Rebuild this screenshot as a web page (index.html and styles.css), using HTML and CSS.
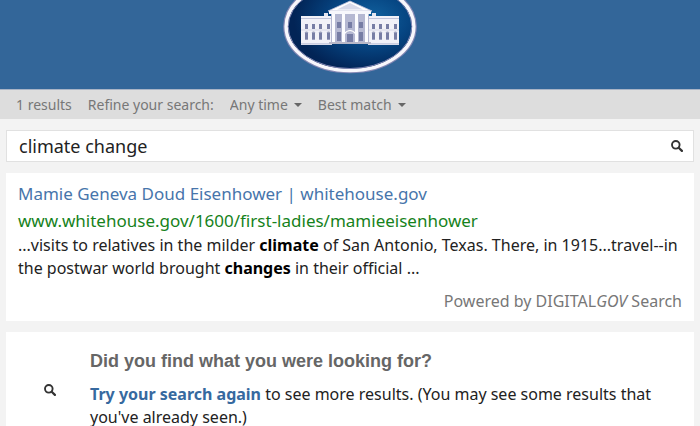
FILE: index.html
```html
<!DOCTYPE html>
<html lang="en">
<head>
    <meta charset="UTF-8">
    <meta name="viewport" content="width=device-width, initial-scale=1.0">
    <title>climate change - Search Results</title>
    <link rel="stylesheet" href="styles.css">
</head>
<body>

<svg width="0" height="0" class="defs" aria-hidden="true">
    <symbol id="search-icon" viewBox="0 0 12 12">
        <circle cx="4.8" cy="4.8" r="3.8" fill="none" stroke="currentColor" stroke-width="1.9"/>
        <path d="M7.7 7.7l3.2 3.2" stroke="currentColor" stroke-width="2.2" stroke-linecap="round"/>
    </symbol>
</svg>

<header class="header">
    <a href="#" aria-label="The White House">
        <svg class="logo" width="134" height="74" viewBox="0 0 134 74">
            <defs>
                <radialGradient id="seal" cx="66%" cy="42%" r="60%">
                    <stop offset="0" stop-color="#1263a0"/>
                    <stop offset="0.5" stop-color="#064582"/>
                    <stop offset="1" stop-color="#022456"/>
                </radialGradient>
                <g id="window">
                    <rect x="0" y="0" width="3" height="5" fill="#777da5"/>
                    <path d="M-0.5 8.7q2-2.6 4 0z" fill="#8f94b5"/>
                    <rect x="0" y="8.7" width="3" height="7" fill="#777da5"/>
                </g>
                <g id="wing">
                    <rect x="0" y="16" width="31" height="29" fill="#f1f1f8"/>
                    <path d="M0 18.5h31M0 43.8h31" stroke="#c0c3da" stroke-width="1.2"/>
                    <path d="M0 30h31" stroke="#d5d6e5"/>
                    <use href="#window" x="4" y="24"/>
                    <use href="#window" x="11" y="24"/>
                    <use href="#window" x="18" y="24"/>
                    <use href="#window" x="26" y="24"/>
                </g>
            </defs>
            <ellipse cx="67" cy="26.5" rx="65.5" ry="45.5" fill="#022456" stroke="#8588b4" stroke-width="2.6"/>
            <ellipse cx="67" cy="26.5" rx="63.8" ry="44" fill="url(#seal)" stroke="#f8f7fc" stroke-width="3.6"/>
            <ellipse cx="67" cy="26.5" rx="61.8" ry="42" fill="none" stroke="#8186b3"/>
            <rect x="41" y="13" width="4" height="4" fill="#e4e5f0"/>
            <rect x="89" y="13" width="4" height="4" fill="#e4e5f0"/>
            <use href="#wing" x="18"/>
            <use href="#wing" x="85"/>
            <rect x="48" y="11" width="38" height="33" fill="#b5b8d2"/>
            <path d="M45 11L67 1l22 10z" fill="#fff" stroke="#b8bad5" stroke-width="0.8"/>
            <path d="M54 9.5l13-6.5 13 6.5z" fill="#d7d9e9"/>
            <rect x="46" y="11" width="42" height="3" fill="#f7f7fc"/>
            <g fill="#777da5">
                <rect x="54" y="22" width="4" height="6"/>
                <rect x="54" y="32" width="4" height="9"/>
                <rect x="65" y="22" width="4" height="6"/>
                <rect x="64" y="34" width="6" height="9"/>
                <rect x="76" y="22" width="4" height="6"/>
                <rect x="76" y="32" width="4" height="9"/>
            </g>
            <path d="M61 34q6-7 12 0" fill="none" stroke="#fff" stroke-width="1.2"/>
            <g fill="#fcfcff">
                <rect x="49" y="14" width="3" height="28"/>
                <rect x="59" y="14" width="3" height="28"/>
                <rect x="72" y="14" width="3" height="28"/>
                <rect x="82" y="14" width="3" height="28"/>
            </g>
            <rect x="46" y="42" width="42" height="2" fill="#b8b8c8"/>
        </svg>
    </a>
</header>

<div class="filters">
    <span>1 results</span>
    <span>Refine your search:</span>
    <span class="dropdown">
        <select aria-label="Time range">
            <option>Any time</option>
            <option>Last day</option>
            <option>Last week</option>
        </select>
        <i class="caret"></i>
    </span>
    <span class="dropdown">
        <select aria-label="Sort order">
            <option>Best match</option>
            <option>Most recent</option>
        </select>
        <i class="caret"></i>
    </span>
</div>

<main class="content">
    <form class="search">
        <input type="text" value="climate change" aria-label="Search">
        <button type="submit" aria-label="Go"><svg class="icon"><use href="#search-icon"/></svg></button>
    </form>

    <section class="card results">
        <h2><a href="#">Mamie Geneva Doud Eisenhower | whitehouse.gov</a></h2>
        <div class="url">www.whitehouse.gov/1600/first-ladies/mamieeisenhower</div>
        <p>...visits to relatives in the milder <strong>climate</strong> of San Antonio, Texas. There, in 1915...travel--in<br>
            the postwar world brought <strong>changes</strong> in their official ...</p>
        <div class="powered">Powered by DIGITAL<em>GOV</em> Search</div>
    </section>

    <section class="card again">
        <svg class="icon"><use href="#search-icon"/></svg>
        <div>
            <h3>Did you find what you were looking for?</h3>
            <p><a href="#">Try your search again</a> to see more results. (You may see some results that<br>
                you've already seen.)</p>
        </div>
    </section>
</main>

</body>
</html>
```

FILE: styles.css
```css
* {
    box-sizing: border-box;
}

body {
    margin: 0;
    background-color: #f3f3f3;
    color: #222;
    font-family: "Noto Sans", sans-serif;
    font-size: 16px;
    line-height: 23px;
}

h2, h3, p {
    margin: 0;
}

a {
    color: #36699f;
    text-decoration: none;
}

.defs {
    position: absolute;
}

.header {
    background-color: #336699;
    text-align: center;
    padding-bottom: 15px;
    border-bottom: 1px solid #a9b4c6;
}

.logo {
    display: block;
    margin: 0 auto;
}

.filters {
    display: flex;
    align-items: center;
    gap: 16px;
    height: 29px;
    padding: 0 16px;
    background-color: #ddd;
    color: #777;
    font-size: 14px;
}

.dropdown {
    display: flex;
    align-items: center;
    gap: 6px;
}

.dropdown select {
    appearance: none;
    field-sizing: content;
    padding: 0;
    border: 0;
    background: none;
    color: inherit;
    font: inherit;
    cursor: pointer;
}

.caret {
    border-top: 4px solid #666;
    border-left: 4px solid transparent;
    border-right: 4px solid transparent;
}

.content {
    padding: 11px 6px 0;
}

.search {
    display: flex;
    height: 32px;
    border: 1px solid #e1e1e1;
    background-color: #fff;
}

.search input {
    flex: 1;
    min-width: 0;
    padding: 0 12px;
    border: 0;
    outline: 0;
    background: none;
    color: #222;
    font: inherit;
    font-size: 18px;
}

.search button {
    display: flex;
    align-items: center;
    padding: 0 10px;
    border: 0;
    background: none;
    color: #333;
    cursor: pointer;
}

.icon {
    flex: none;
    width: 12px;
    height: 12px;
    color: #333;
}

.card {
    margin-top: 11px;
    background-color: #fff;
}

.results {
    padding: 7px 12px 8px;
}

.results h2 {
    font-size: 17px;
    font-weight: normal;
    line-height: 27px;
}

.results h2 a {
    color: #4775ab;
}

.url {
    color: #16821b;
    font-size: 17px;
    line-height: 27px;
}

.results strong {
    color: #000;
}

.powered {
    margin-top: 10px;
    color: #777;
    text-align: right;
}

.again {
    display: flex;
    align-items: center;
    gap: 34px;
    padding: 18px 38px 0;
}

.again h3 {
    margin-bottom: 10px;
    color: #666;
    font-family: "Liberation Sans", sans-serif;
    font-size: 18px;
}

.again a {
    font-weight: bold;
}
```
